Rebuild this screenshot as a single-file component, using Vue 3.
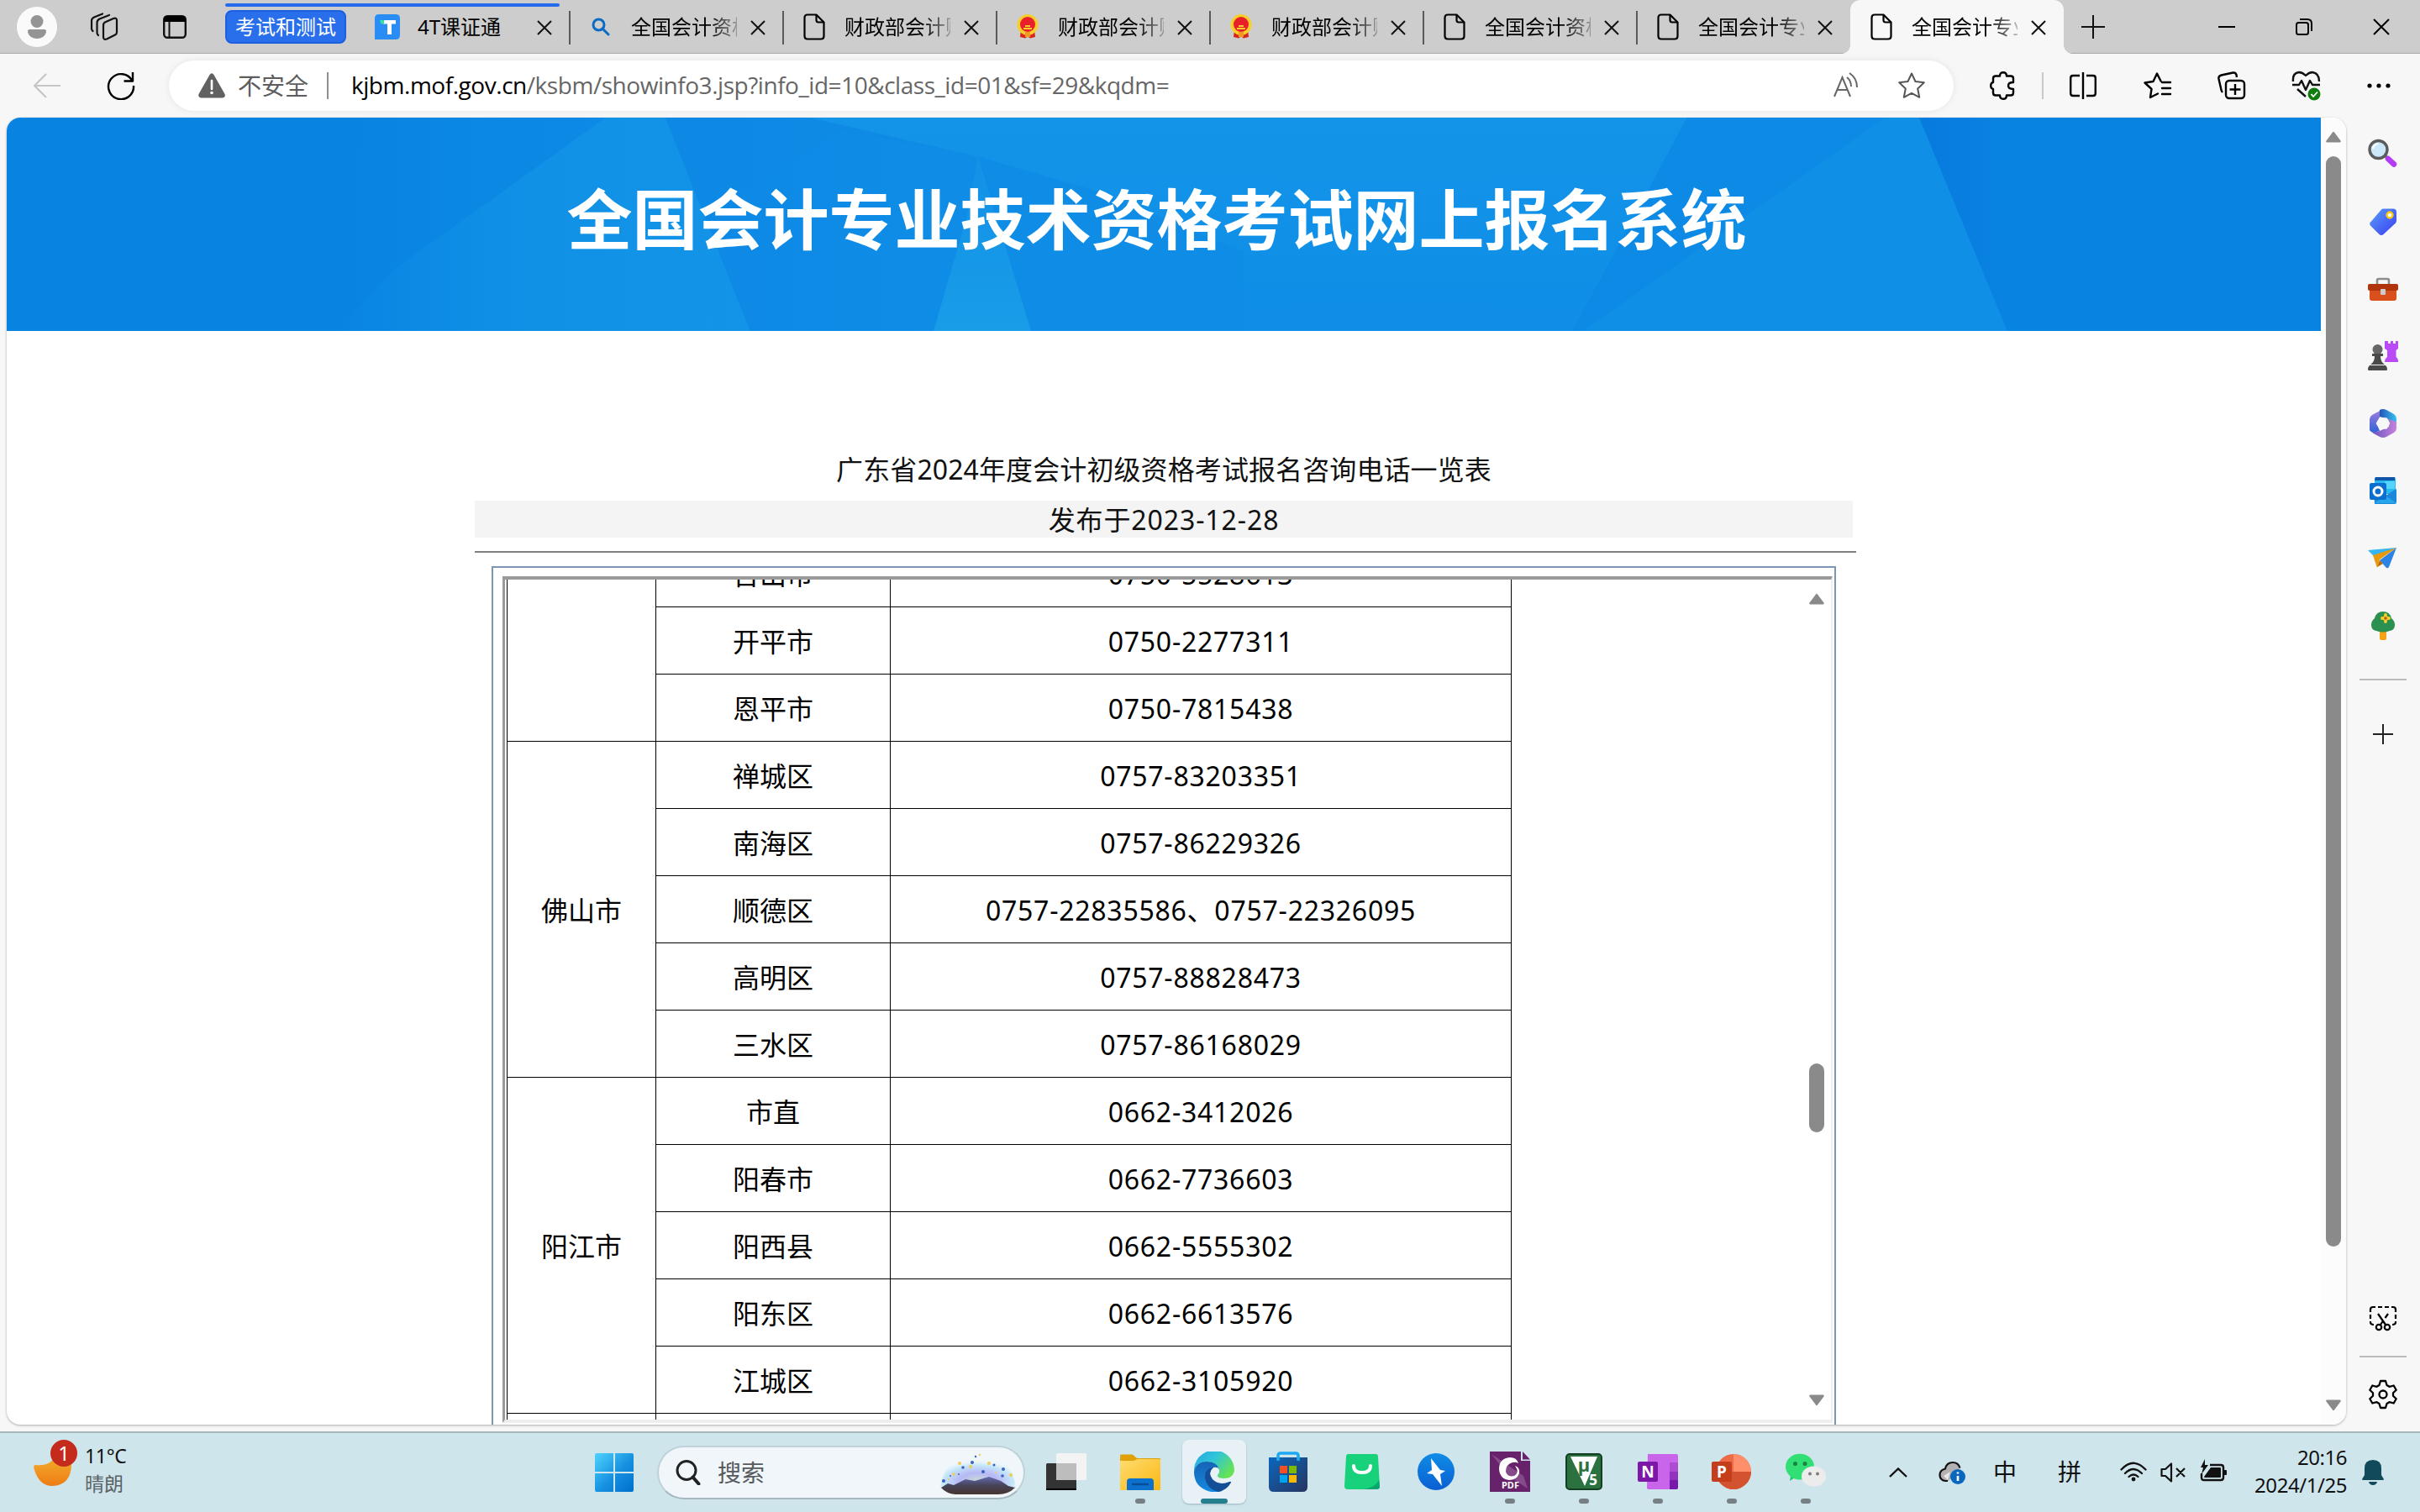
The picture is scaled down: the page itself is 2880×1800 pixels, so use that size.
<script setup>
const tabs = [
  { title: '4T课证通', icon: 'tclass' },
  { title: '全国会计资格评价网', icon: 'search' },
  { title: '财政部会计财务评价中心', icon: 'page' },
  { title: '财政部会计财务评价中心', icon: 'emblem' },
  { title: '财政部会计财务评价中心', icon: 'emblem' },
  { title: '全国会计资格评价网', icon: 'page' },
  { title: '全国会计专业技术资格', icon: 'page' },
  { title: '全国会计专业技术资格', icon: 'page', active: true },
]

const groups = [
  { city: '', rows: [['台山市', '0750-5528613'], ['开平市', '0750-2277311'], ['恩平市', '0750-7815438']] },
  {
    city: '佛山市',
    rows: [
      ['禅城区', '0757-83203351'],
      ['南海区', '0757-86229326'],
      ['顺德区', '0757-22835586、0757-22326095'],
      ['高明区', '0757-88828473'],
      ['三水区', '0757-86168029'],
    ],
  },
  {
    city: '阳江市',
    rows: [
      ['市直', '0662-3412026'],
      ['阳春市', '0662-7736603'],
      ['阳西县', '0662-5555302'],
      ['阳东区', '0662-6613576'],
      ['江城区', '0662-3105920'],
    ],
  },
  { city: '', rows: [['', '']] },
]
</script>

<template>
  <div class="screen">
    <header class="tabbar">
      <svg class="avatar" width="48" height="48" viewBox="0 0 48 48">
        <circle cx="24" cy="24" r="24" fill="#fafafa" />
        <circle cx="24" cy="17.500" r="7.500" fill="#949494" />
        <path d="M15 27h18q2 0 2 2c0 5-5 9-11 9s-11-4-11-9q0-2 2-2z" fill="#949494" />
      </svg>
      <svg class="ws" width="34" height="34" viewBox="0 0 34 34" fill="none" stroke="#111" stroke-width="2.200" stroke-linejoin="round" stroke-linecap="round">
        <path d="M19 11l9-4q4-1.500 4 2.500v14q0 2-2 3l-10 5q-4 1.500-4-2.500V15q0-3 3-4z" />
        <path d="M10 27q-1.500-1-1.500-3V12q0-3 3-4.500L23 3" />
        <path d="M3.500 22Q2 21 2 19V9.500Q2 7 5 5.500L15 1.500" />
      </svg>
      <svg class="vt" width="28" height="28" viewBox="0 0 28 28">
        <rect x="1.200" y="1.200" width="25.600" height="25.600" rx="4" fill="none" stroke="#111" stroke-width="2.400" />
        <path d="M1 8V5q0-4 4-4h18q4 0 4 4v3z" fill="#000" />
        <path d="M7.500 8v19" stroke="#111" stroke-width="2" />
      </svg>
      <div class="group">
        <div class="pill">考试和测试</div>
        <div class="groupline"></div>
      </div>
      <div v-for="(t, i) in tabs" :key="i" class="tab" :class="{ active: t.active, last: i === 6 }">
        <span class="ticon">
          <svg v-if="t.icon === 'tclass'" width="30" height="30" viewBox="0 0 30 30">
            <path d="M5 0h20q5 0 5 5v20q0 5-5 5H0V5q0-5 5-5z" fill="#2a8df6" />
            <path d="M10 7h15v4.500h-5V24h-5V11.500h-5z" fill="#fff" />
            <path d="M6 7h5v4.500H7.500z" fill="#2be3a4" />
          </svg>
          <svg v-else-if="t.icon === 'search'" width="22" height="22" viewBox="0 0 22 22" fill="none" stroke="#0b6bc4" stroke-width="3">
            <circle cx="8.500" cy="8.500" r="6.500" /><path d="M13 13l7 7" stroke-linecap="round" />
          </svg>
          <svg v-else-if="t.icon === 'page'" width="26" height="32" viewBox="0 0 26 32" fill="none" stroke="#000" stroke-width="2.200" stroke-linejoin="round">
            <path d="M5 1.500h10.500l9 9V27q0 3.500-3.500 3.500H5Q1.500 30.500 1.500 27V5Q1.500 1.500 5 1.500z" />
            <path d="M15.500 1.500V8q0 2.500 2.500 2.500h6.500" />
          </svg>
          <svg v-else width="28" height="30" viewBox="0 0 28 30">
            <path d="M6 18l-1 9 6 1.500 3-2 3 2 6-1.500-1-9z" fill="#d9261c" />
            <circle cx="14" cy="12.500" r="12.500" fill="#f8cf2a" />
            <circle cx="14" cy="12" r="9" fill="#e8202a" />
            <path d="M9 16h10v2H9zM11 13h6v2h-6z" fill="#f8cf2a" />
            <path d="M11 21h6v6h-6z" fill="#f29a24" />
          </svg>
        </span>
        <span class="ttext" :class="{ fade: i > 0 }">{{ t.title }}</span>
        <svg class="tclose" width="18" height="18" viewBox="0 0 18 18" stroke="#111" stroke-width="2"><path d="M1 1l16 16M17 1L1 17" /></svg>
      </div>
      <svg class="newtab" width="28" height="28" viewBox="0 0 28 28" stroke="#111" stroke-width="2"><path d="M14 0v28M0 14h28" /></svg>
      <div class="winbtns">
        <svg width="20" height="20" viewBox="0 0 20 20" stroke="#000" stroke-width="2"><path d="M0 10h20" /></svg>
        <svg width="20" height="20" viewBox="0 0 20 20" fill="none" stroke="#000" stroke-width="2"><rect x="1" y="5" width="14" height="14" rx="2.500" /><path d="M5 1h9q5 0 5 5v9" /></svg>
        <svg width="20" height="20" viewBox="0 0 20 20" stroke="#000" stroke-width="2"><path d="M1 1l18 18M19 1L1 19" /></svg>
      </div>
    </header>

    <div class="toolbar">
      <svg class="back" width="34" height="30" viewBox="0 0 34 30" fill="none" stroke="#c6c6c6" stroke-width="2.200"><path d="M33 15H2M16 1L2 15l14 14" /></svg>
      <svg class="reload" width="34" height="34" viewBox="0 0 34 34" fill="none" stroke="#000" stroke-width="2.400"><path d="M30.500 11.500A15 15 0 1 0 32 17M31 1v10.500H20.500" stroke-linejoin="round" /></svg>
      <div class="address">
        <svg class="warn" width="32" height="30" viewBox="0 0 32 30">
          <path d="M13.500 2q2.500-3.500 5 0l13 23q1.500 4-3 4.500h-25Q-.5 29 .5 25z" fill="#616161" />
          <path d="M16 9v10" stroke="#fff" stroke-width="2.600" stroke-linecap="round" /><circle cx="16" cy="23.500" r="1.800" fill="#fff" />
        </svg>
        <span class="unsafe">不安全</span>
        <i class="asep"></i>
        <span class="url"><b>kjbm.mof.gov.cn</b>/ksbm/showinfo3.jsp?info_id=10&amp;class_id=01&amp;sf=29&amp;kqdm=</span>
        <svg class="read" width="32" height="32" viewBox="0 0 32 32" fill="none" stroke="#666" stroke-width="2"><path d="M1 29L10.500 6 20 29M4.500 21h12M16 6q5 4 5 11M19 1q9 6 9 17" /></svg>
        <svg class="star" width="32" height="32" viewBox="0 0 32 32" fill="none" stroke="#555" stroke-width="2" stroke-linejoin="round"><path d="M16 1.500l4.500 9.500 10.300 1.300-7.600 7.200 2 10.300L16 24.800l-9.200 5 2-10.300L1.200 12.300 11.500 11z" /></svg>
      </div>
      <svg class="puz" width="30" height="34" viewBox="0 0 30 34" fill="none" stroke="#000" stroke-width="2.400" stroke-linejoin="round"><path d="M7 5.500h5q0-4.300 4-4.300t4 4.300h5q3 0 3 3v4.500q-6 0-6 4t6 4v4.500q0 3-3 3h-5q0 4.300-4 4.300t-4-4.300H7q-3 0-3-3V21q-2.800-.5-2.800-4T4 13V8.500q0-3 3-3z" /></svg>
      <i class="tsep"></i>
      <svg class="split" width="32" height="34" viewBox="0 0 32 34" fill="none" stroke="#000" stroke-width="2.400"><path d="M16 1v32M12 5H4Q1.200 5 1.200 8v18q0 3 2.800 3h8M20 5h8q2.800 0 2.800 3v18q0 3-2.800 3h-8" /></svg>
      <svg class="favs" width="34" height="32" viewBox="0 0 34 32" fill="none" stroke="#000" stroke-width="2.400" stroke-linejoin="round" stroke-linecap="round"><path d="M17 25.500L8 30l1.500-10L1.500 12.500 11.500 11 16 1.500 20.500 10.500M22 12h10M22 19h10M22 26h10" /></svg>
      <svg class="coll" width="34" height="34" viewBox="0 0 34 34" fill="none" stroke="#000" stroke-width="2.400" stroke-linejoin="round"><rect x="10" y="11" width="22" height="21" rx="4" /><path d="M21 15v13M14.500 21.500h13M6 25q-1-1-1.500-3L1.500 9q-.7-3.500 3-4.500l14-3q3-.5 4 2.500L23 7" /></svg>
      <svg class="heart" width="36" height="36" viewBox="0 0 36 36" fill="none" stroke="#111" stroke-width="2.400" stroke-linejoin="round"><path d="M2 13Q1 3 9 2q4 0 8 4 4-4 8-4 8 1 8 11M1 17h8l3-5 5 11 5-11 3 5h9M7 22l10 9" /><circle cx="27" cy="28" r="7.500" fill="#107c10" stroke="none" /><path d="M23.500 28l2.500 3 5-5.500" stroke="#fff" stroke-width="1.800" /></svg>
      <svg class="dots" width="28" height="6" viewBox="0 0 28 6"><circle cx="3" cy="3" r="2.600" /><circle cx="14" cy="3" r="2.600" /><circle cx="25" cy="3" r="2.600" /></svg>
    </div>

    <div class="body">
      <main class="view">
        <div class="page">
          <div class="banner">
            <svg class="facets" width="2754" height="254" viewBox="8 140 2754 254" preserveAspectRatio="none">
              <defs>
                <linearGradient id="haze" x1="0" x2="1"><stop offset="0" stop-color="#0f8ee7" stop-opacity="0" /><stop offset="1" stop-color="#0f8ee7" stop-opacity=".9" /></linearGradient>
                <linearGradient id="fade" x1="0" x2="1"><stop offset="0" stop-color="#1193e7" stop-opacity="0" /><stop offset=".45" stop-color="#1193e7" stop-opacity=".8" /><stop offset="1" stop-color="#1394e8" /></linearGradient>
                <linearGradient id="mid" x1="0" x2="1"><stop offset="0" stop-color="#0d88e5" /><stop offset="1" stop-color="#108ee7" /></linearGradient>
                <linearGradient id="top" x1="0" x2="0" y1="0" y2="1"><stop offset="0" stop-color="#1394e8" /><stop offset="1" stop-color="#0f8de7" /></linearGradient>
                <linearGradient id="shard" x1="0" x2="0" y1="0" y2="1"><stop offset="0" stop-color="#1697e8" stop-opacity=".5" /><stop offset="1" stop-color="#199de8" /></linearGradient>
                <linearGradient id="edge" x1="0" x2="1"><stop offset="0" stop-color="#077bde" /><stop offset="1" stop-color="#0983e2" /></linearGradient>
              </defs>
              <path d="M8 140H2762V394H8z" fill="#0983e2" />
              <path d="M430 140H792L850 394H400z" fill="url(#haze)" />
              <path d="M721 140H792L893 394H400L470 320z" fill="url(#fade)" />
              <path d="M792 140H1400V394H893z" fill="url(#mid)" />
              <path d="M840 260L1000 155 1166 187 1227 394H893z" fill="#128fe7" opacity=".3" />
              <path d="M964 140H2008L1872 394H1400L1313 230 1166 187z" fill="url(#top)" />
              <path d="M1166 187L1313 230 1480 300V394H1227z" fill="#0f8de6" />
              <path d="M1164 187L1227 394H1111L1150 260z" fill="url(#shard)" />
              <path d="M2008 140H2284L1884 394H1872z" fill="#0d89e6" />
              <path d="M2243 140H2284L2389 394H1884z" fill="#0f8fe6" />
              <path d="M2284 140H2390V394H2389z" fill="url(#edge)" />
            </svg>
            <h1>全国会计专业技术资格考试网上报名系统</h1>
          </div>
          <section class="article">
            <div class="headline">广东省2024年度会计初级资格考试报名咨询电话一览表</div>
            <div class="date">发布于2023-12-28</div>
            <div class="rule"></div>
            <div class="frame">
              <div class="inner">
                <table>
                  <tbody v-for="(g, gi) in groups" :key="gi">
                    <tr v-for="(r, ri) in g.rows" :key="ri">
                      <td v-if="ri === 0" class="city" :rowspan="g.rows.length">{{ g.city }}</td>
                      <td class="area">{{ r[0] }}</td>
                      <td class="phone">{{ r[1] }}</td>
                    </tr>
                  </tbody>
                </table>
                <div class="iscroll">
                  <svg width="18" height="14" viewBox="0 0 18 14"><path d="M8 1.500q1-1.500 2 0l7.500 10q.7 2-1 2H1.500q-2 0-1-2z" fill="#8a8a8a" /></svg>
                  <div class="ithumb"></div>
                  <svg class="down" width="18" height="14" viewBox="0 0 18 14"><path d="M8 12.500q1 1.500 2 0l7.500-10q.7-2-1-2H1.500q-2 0-1 2z" fill="#8a8a8a" /></svg>
                </div>
              </div>
            </div>
          </section>
        </div>
        <div class="scroll">
          <svg width="18" height="14" viewBox="0 0 18 14"><path d="M8 1.500q1-1.500 2 0l7.500 10q.7 2-1 2H1.500q-2 0-1-2z" fill="#8a8a8a" /></svg>
          <div class="thumb"></div>
          <svg class="down" width="18" height="14" viewBox="0 0 18 14"><path d="M8 12.500q1 1.500 2 0l7.500-10q.7-2-1-2H1.500q-2 0-1 2z" fill="#8a8a8a" /></svg>
        </div>
      </main>

      <aside class="side">
        <svg viewBox="0 0 36 36"><path d="M21 21l7 6" stroke="#777" stroke-width="4" /><path d="M24 24l7 6.500" stroke="#b43cf5" stroke-width="6.500" stroke-linecap="round" /><circle cx="12.500" cy="13" r="10.500" fill="#cbe8fb" stroke="#5c5c5c" stroke-width="3.400" /><path d="M6 12q1-5 6-6" stroke="#fff" stroke-width="2" fill="none" /></svg>
        <svg viewBox="0 0 36 36"><defs><linearGradient id="tg" x1="0" x2="1" y1="0" y2="1"><stop offset="0" stop-color="#5a9dfa" /><stop offset="1" stop-color="#3a3df0" /></linearGradient></defs><path transform="translate(0 1.500)" d="M18 2h12q4 0 4 4v10q0 2-1.500 3.500L19 32q-3 3-6 0L3 22q-2-3 1-5L16 3q1-1 2-1z" fill="url(#tg)" /><circle cx="26" cy="11" r="3.500" fill="#fff" stroke="#f8c90e" stroke-width="2.400" /></svg>
        <svg viewBox="0 0 36 36"><path d="M11 12V8q0-2 2-2h10q2 0 2 2v4" fill="none" stroke="#8c8c8c" stroke-width="2.600" /><path d="M2 16h32v13q0 3-3 3H5q-3 0-3-3z" fill="#d9501c" /><path d="M2 12h32q2 0 2 2v4q0 2-2 2H2q-2 0-2-2v-4q0-2 2-2z" fill="#b0340c" /><rect x="15" y="18" width="6" height="7" rx="1" fill="#c9cdd0" /></svg>
        <svg viewBox="0 0 36 36"><path d="M20 0h4v3h3V0h3v3h3V0h3v9l-2.500 2v8q3 2 2.500 6H20q0-4 3-6v-8l-3-2z" fill="#b84af8" /><circle cx="11.500" cy="10" r="6" fill="#666" /><path d="M5 15h13v3H5zM8 18h7q0 7 5 10H3q5-3 5-10zM2 29h19q3 3 1.500 6H.5q-1.500-3 1.500-6z" fill="#4a4a4a" /></svg>
        <svg viewBox="0 0 36 36"><defs><linearGradient id="m1" x1="0" x2="0" y1="0" y2="1"><stop offset="0" stop-color="#a57fe0" /><stop offset="1" stop-color="#2f62d8" /></linearGradient><linearGradient id="m2" x1="0" x2="1"><stop offset="0" stop-color="#2455b8" /><stop offset="1" stop-color="#37c3f0" /></linearGradient><linearGradient id="m3" x1="0" x2="1"><stop offset="0" stop-color="#6a55c0" /><stop offset="1" stop-color="#c583dc" /></linearGradient></defs><path d="M18 1L5 8q-3 2-3 5v12q0 3 5 4l7-2-3-9 3-7z" fill="url(#m1)" /><path d="M14 2q4-2 8 0l9 5q3 2 3 5v8l-10-7-10-3z" fill="url(#m2)" /><path d="M34 16v8q0 3-3 5l-9 5q-4 2-8 0l-9-5 9-2 11-5-1-9z" fill="url(#m3)" /><path d="M14 12h8l3.500 6-3.500 6h-8l-3.500-6z" fill="#f7f7f7" stroke="#f7f7f7" stroke-width="1.500" stroke-linejoin="round" /></svg>
        <svg viewBox="0 0 36 36"><path d="M9 2h22q2 0 2 2v18H8V3z" fill="#28b8f0" /><path d="M9 2h23v4H8z" fill="#0f55a8" /><path d="M20 7h12v9H20z" fill="#55d5fc" /><path d="M7 20l14 4 13-8v16q0 2-2 2H8z" fill="#1b88dc" /><path d="M21 24l13 9H8z" fill="#28a6ea" /><rect x="2" y="9" width="20" height="20" rx="2" fill="#0b6fcf" /><circle cx="12" cy="19" r="5" fill="none" stroke="#fff" stroke-width="3" /></svg>
        <svg viewBox="0 0 36 36"><path d="M0 8L34 5 10 18z" fill="#35b5f3" /><path d="M6 14L34 5 14 19 11 29z" fill="#e9990c" /><path d="M14 20L34 5 25 28q-1 2-3 1z" fill="#2b83e6" /><path d="M11 28l3-8 4 4z" fill="#b86b05" /></svg>
        <svg viewBox="0 0 36 36"><path d="M14 22h8v11q0 2-2 2h-4q-2 0-2-2z" fill="#f5a314" /><path d="M18 1q8 0 10 8 4 3 4 8 0 6-6 7-8 3-16 0-6-1-6-7 0-5 4-8 2-8 10-8z" fill="#2a9150" /><path d="M21 5v8M17 9h8" stroke="#f8cf2a" stroke-width="3.800" stroke-linecap="round" /><circle cx="21" cy="9" r="1.800" fill="#b85e10" /></svg>
        <i class="sline"></i>
        <svg class="plus" viewBox="0 0 24 24" stroke="#222" stroke-width="2"><path d="M12 0v24M0 12h24" /></svg>
        <svg class="cut" viewBox="0 0 36 36" fill="none" stroke="#000" stroke-width="2.200"><path d="M3 10V7q0-3 3-3h3M12 4h5M20 4h5M28 4h2q3 0 3 3v3M3 13v5M33 13v5M3 21v1q0 3 4 3M33 21v1q0 3-4 3M12 12l9 13M24 12l-3.500 5M18 20.500L15 25" /><circle cx="13" cy="28" r="3.200" /><circle cx="23" cy="28" r="3.200" /></svg>
        <i class="sline b"></i>
        <svg class="gear" viewBox="0 0 36 36" fill="none" stroke="#000" stroke-width="2.300" stroke-linejoin="round"><path d="M15 2h6l1.500 5 3 1.800 5.200-1.300 3 5.200-3.700 3.600v3.400l3.700 3.600-3 5.200-5.200-1.300-3 1.800L21 34h-6l-1.500-5-3-1.800-5.200 1.300-3-5.200L6 19.700v-3.400l-3.700-3.600 3-5.200 5.200 1.300 3-1.800z" /><circle cx="18" cy="18" r="4.500" /></svg>
      </aside>
    </div>

    <footer class="taskbar">
      <div class="weather">
        <svg width="54" height="58" viewBox="0 0 54 58"><defs><linearGradient id="mn" x1="0" x2="0" y1="0" y2="1"><stop offset="0" stop-color="#f3b52c" /><stop offset="1" stop-color="#ee7c16" /></linearGradient></defs><path d="M26 16Q24 33 2 31q-3 0-1 6 6 19 21 19 23-1 23-26V20z" fill="url(#mn)" /><circle cx="36" cy="17" r="16" fill="#c42b1c" /><text x="36" y="25.500" text-anchor="middle" class="badge">1</text></svg>
        <div class="wtext"><span>11°C</span><span class="dim">晴朗</span></div>
      </div>
      <svg class="start" width="46" height="46" viewBox="0 0 46 46"><defs><linearGradient id="st" gradientUnits="userSpaceOnUse" x1="0" y1="0" x2="46" y2="46"><stop offset="0" stop-color="#4fd3fd" /><stop offset=".55" stop-color="#1590e0" /><stop offset="1" stop-color="#0070cc" /></linearGradient></defs><path d="M2 0h20v22H0V2Q0 0 2 0zM24 0h20q2 0 2 2v20H24zM0 24h22v22H2q-2 0-2-2zM24 24h22v20q0 2-2 2H24z" fill="url(#st)" /></svg>
      <div class="search">
        <svg width="30" height="30" viewBox="0 0 30 30" fill="none" stroke="#222" stroke-width="3"><circle cx="13" cy="12.500" r="11" /><path d="M20.500 20.500l7 8" stroke-width="4" stroke-linecap="round" /></svg>
        <span>搜索</span>
        <svg class="mount" width="90" height="50" viewBox="0 0 90 50">
          <defs><radialGradient id="sky" cx=".5" cy=".8" r=".62"><stop offset="0" stop-color="#c9dfd0" /><stop offset=".4" stop-color="#b7b8f6" /><stop offset=".75" stop-color="#c5e8fa" /><stop offset="1" stop-color="#f0f6fa" stop-opacity="0" /></radialGradient><linearGradient id="mt" x1="0" x2="0" y1="0" y2="1"><stop offset="0" stop-color="#646bb0" /><stop offset=".5" stop-color="#464257" /><stop offset="1" stop-color="#47352f" /></linearGradient></defs>
          <path d="M0 42Q4 2 45 0 86 2 90 42z" fill="url(#sky)" />
          <path d="M1 41l8-5 7 2 14-7 11 2 17-5 14 5 9 6 8 2q-8 8-20 8H18Q7 48 1 41z" fill="url(#mt)" />
          <g fill="#3b62bd"><circle cx="4" cy="33" r="2" /><circle cx="27" cy="17" r="1.800" /><circle cx="38" cy="11" r="2" /><circle cx="51" cy="22" r="2" /><circle cx="75" cy="19" r="2" /><circle cx="74" cy="27" r="1.800" /><circle cx="64" cy="14" r="1.500" /><circle cx="42" cy="4" r="1.200" /><circle cx="22" cy="25" r="1" /><circle cx="12" cy="27" r="1" /></g>
          <g fill="#f1cc55"><circle cx="23" cy="12" r="2" /><circle cx="36" cy="16" r="2" /><circle cx="58" cy="12" r="2" /><circle cx="16" cy="25" r="1.800" /><circle cx="84" cy="26" r="2" /><circle cx="47" cy="2" r="1.200" /><circle cx="66" cy="23" r="1" /><circle cx="10" cy="31" r="1" /></g>
        </svg>
      </div>
      <div class="apps">
        <div class="app"><svg viewBox="0 0 48 48"><rect x="0" y="14" width="36" height="32" rx="1.500" fill="#333" /><path d="M0 44h36v1q0 1-1 1H1q-1 0-1-1z" fill="#000" /><rect x="12" y="2" width="36" height="32" rx="1.500" fill="#f3f3f3" /><path d="M12 14h24v20H12z" fill="#bdbdbd" /></svg></div>
        <div class="app run"><svg viewBox="0 0 48 48"><defs><linearGradient id="fd" x1="0" x2="1" y1="0" y2="1"><stop offset="0" stop-color="#ffdc70" /><stop offset="1" stop-color="#fbb711" /></linearGradient></defs><path d="M0 5q0-1.500 1.500-1.500H14q1.500 0 3 2L20 8h27q1 0 1 1v8H0z" fill="#e0a106" /><path d="M0 11h16l5-2h26q1 0 1 1v35q0 1-1 1H1q-1 0-1-1z" fill="url(#fd)" /><path d="M8 46V36q0-4 4-4h24q4 0 4 4v10z" fill="#0c71cc" /><path d="M14 39h20" stroke="#0a4d94" stroke-width="2.400" /></svg></div>
        <div class="app cur"><svg viewBox="0 0 48 48"><defs><linearGradient id="e1" x1="0" x2="1" y1="0" y2=".6"><stop offset="0" stop-color="#2aa5e8" /><stop offset=".5" stop-color="#30c5d8" /><stop offset="1" stop-color="#66e255" /></linearGradient><linearGradient id="e2" x1="0" x2="0" y1="0" y2="1"><stop offset="0" stop-color="#1664b5" /><stop offset="1" stop-color="#1489e0" /></linearGradient></defs><path d="M0 24A24 24 0 0 1 48 21C48 29 42 32 36 32Q28 32 28 29C28 27 31 26 30 22Q27 12 15 12 4 13 0 24z" fill="url(#e1)" /><path d="M0 24Q3 12 15 12q12 0 15 9-2-3-7-2-6 2-6 11 2 14 16 17-10 3-19-1Q0 40 0 24z" fill="url(#e2)" /><path d="M21 19q-9 3-8 13 3 13 16 16 10-2 15-11 0-2-2-1-12 5-20-3-6-8 1-14z" fill="#124f96" /></svg></div>
        <div class="app"><svg viewBox="0 0 48 48"><defs><linearGradient id="sr" x1="0" x2="1" y1="0" y2="1"><stop offset="0" stop-color="#0b67bd" /><stop offset="1" stop-color="#27345f" /></linearGradient></defs><path d="M1 7h46v35q0 6-6 6H7q-6 0-6-6z" fill="url(#sr)" /><path d="M12 11V5q0-3 3-3h18q3 0 3 3v6" fill="none" stroke="#1ca9f3" stroke-width="3.600" /><path d="M14 17h9v9h-9z" fill="#f25022" /><path d="M25 17h9v9h-9z" fill="#7fba00" /><path d="M14 28h9v9h-9z" fill="#00a4ef" /><path d="M25 28h9v9h-9z" fill="#ffb900" /></svg></div>
        <div class="app"><svg viewBox="0 0 48 48"><path d="M5 6q0-3 3-3h32q3 0 3 3l2 35q0 4-4 4H7q-4 0-4-4z" fill="#17d27b" /><path d="M44 34l1 8q0 3-4 3H25q15-2 19-11z" fill="#08a86c" /><path d="M14 17q0 8 10 8t10-8" fill="none" stroke="#fff" stroke-width="4" stroke-linecap="round" /></svg></div>
        <div class="app"><svg viewBox="0 0 48 48"><defs><linearGradient id="bl" x1="0" x2="0" y1="0" y2="1"><stop offset="0" stop-color="#108ce6" /><stop offset="1" stop-color="#0a5fd2" /></linearGradient></defs><circle cx="24" cy="24" r="22" fill="url(#bl)" /><path d="M18 8l11 14 6 1-6 4 2 14L20 27l-7-1 6-4z" fill="#fff" /></svg></div>
        <div class="app run"><svg viewBox="0 0 48 48"><path d="M0 0h37v11h11v37H0z" fill="#68216b" /><path d="M39 0l9 9.500h-9z" fill="#68216b" /><path d="M2 3l38 26 5 15-23-15z" fill="#8d5a92" opacity=".75" /><path d="M34 14q-2-7-10-7-13 1-13 14 1 12 12 13 9 0 12-8 1-7-5-9 6 8-1 12-8 2-10-5 0-9 8-11 4-1 7 1z" fill="#fff" /><text x="24.500" y="44" text-anchor="middle" class="pdf">PDF</text></svg></div>
        <div class="app run"><svg viewBox="0 0 48 48"><rect x="3" y="3" width="42" height="42" rx="4" fill="#2c7240" stroke="#153f22" stroke-width="2" /><path d="M8 6h32L25 41z" fill="#fff" /><text x="24" y="24" text-anchor="middle" class="mu">µ</text><text x="35" y="40" text-anchor="middle" class="five">5</text></svg></div>
        <div class="app run"><svg viewBox="0 0 48 48"><path d="M12 3h34q2 0 2 2v38q0 2-2 2H13q-2 0-2-2z" fill="#ca64ea" /><path d="M38 13h10v11H38z" fill="#ae4bd5" /><path d="M38 24h10v10H38z" fill="#9332bf" /><path d="M38 34h10v9q0 2-2 2h-8z" fill="#7719aa" /><rect x="0" y="12" width="24" height="24" rx="2" fill="#7c17a8" /><text x="12" y="31" text-anchor="middle" class="ltr">N</text></svg></div>
        <div class="app run"><svg viewBox="0 0 48 48"><circle cx="26" cy="24" r="21" fill="#ed6c47" /><path d="M26 3a21 21 0 0 1 21 21H26z" fill="#ff8f6b" /><path d="M5 24h42a21 21 0 0 1-42 0z" fill="#d35230" /><rect x="0" y="12" width="24" height="24" rx="2" fill="#c43e1c" /><text x="12" y="31" text-anchor="middle" class="ltr">P</text></svg></div>
        <div class="app run"><svg viewBox="0 0 48 48"><path d="M6 29l-1 6 6-4z" fill="#1bcb62" /><circle cx="17" cy="19" r="17" fill="#32df75" transform="translate(0 1) scale(1 .9)" /><path d="M38 36l5 6 0-9z" fill="#e4e4e4" /><ellipse cx="33.500" cy="29.500" rx="14.500" ry="12" fill="#ececec" /><g fill="#17843f"><circle cx="11.500" cy="14.500" r="2.500" /><circle cx="23" cy="14.500" r="2.500" /></g><g fill="#7d7d7d"><circle cx="29" cy="26.500" r="2" /><circle cx="38" cy="26.500" r="2" /></g></svg></div>
      </div>
      <div class="tray">
        <svg class="chev" width="22" height="12" viewBox="0 0 22 12" fill="none" stroke="#111" stroke-width="2.400"><path d="M1 11L11 1.500 21 11" /></svg>
        <svg class="cloud" width="32" height="30" viewBox="0 0 32 30"><path d="M10 25H8q-6.500-1-6.500-7T8 10.500Q9.500 3 17 3q6.500 0 8.500 6.500L12 25z" fill="#b3b1b3" /><path d="M11 25H8q-6.500-1-6.500-7T8 10.500Q9.500 3 17 3q6.500 0 8.500 6.500" fill="none" stroke="#111" stroke-width="2.200" /><path d="M6 19l8-5-3 10z" fill="#e8e8e8" /><circle cx="23" cy="20" r="9" fill="#0a67c0" /><path d="M23 19v6M23 14.500v2" stroke="#fff" stroke-width="2.600" /></svg>
        <span class="ime">中</span>
        <span class="ime two">拼</span>
        <svg class="wifi" width="32" height="24" viewBox="0 0 32 24" fill="none" stroke="#111" stroke-width="2.300" stroke-linecap="round"><path d="M1.500 9.500Q16-6 30.500 9.500M6 14q10-10 20 0M10.500 18q5.500-5 11 0" /><circle cx="16" cy="21" r="2.400" fill="#111" stroke="none" /></svg>
        <svg class="spk" width="32" height="24" viewBox="0 0 32 24" fill="none" stroke="#111" stroke-width="2.200" stroke-linejoin="round"><path d="M1.500 8H6l7-6.500v21L6 16H1.500zM19 7l10 10M29 7L19 17" /></svg>
        <svg class="bat" width="34" height="28" viewBox="0 0 34 28"><path d="M12 7h13q3 0 3 3v12q0 3-3 3H5q-3 0-3-3v-5" fill="none" stroke="#111" stroke-width="2.400" /><path d="M13 10h11q1 0 1 1v10q0 1-1 1H6q-1 0-1-1z" fill="#111" /><path d="M29 13h2q1 0 1 1v4q0 1-1 1h-2z" fill="#111" /><path d="M6 0L1 10h3L2 18l8-11H6z" fill="#111" /></svg>
        <div class="clock"><span>20:16</span><span>2024/1/25</span></div>
        <svg class="bell" width="28" height="30" viewBox="0 0 28 30" fill="#114b5b"><path d="M14 0q10 0 10 10v8l3 5q0 1-1 1H2q-1 0-1-1l3-5v-8Q4 0 14 0zM9 26h10q-1 4-5 4t-5-4z" /></svg>
      </div>
    </footer>
  </div>
</template>

<style>
body {
  background: #f7f7f7;
  overflow: hidden;
}
</style>

<style scoped>
.screen {
  width: 2880px;
  height: 1800px;
  display: flex;
  flex-direction: column;
  overflow: hidden;
  background: #f7f7f7;
  font-family: "Noto Sans", "Noto Sans CJK SC", sans-serif;
  color: #000;
}
svg { display: block; flex: none; }
.tabbar {
  height: 64px;
  flex: none;
  display: flex;
  align-items: center;
  background: #cdcdcd;
  box-shadow: inset 0 -2px 1px -1px #a9a9a9;
}
.avatar { margin-left: 20px; }
.ws { margin-left: 39px; }
.vt { margin-left: 53px; }
.group { margin-left: 46px; width: 156px; position: relative; }
.pill {
  width: 144px;
  height: 40px;
  box-sizing: border-box;
  border: 2px solid #1d5fe0;
  border-radius: 8px;
  background: #296fec;
  color: #fff;
  font-size: 24px;
  line-height: 36px;
  text-align: center;
  white-space: nowrap;
}
.groupline {
  position: absolute;
  left: 0;
  top: -8px;
  width: 398px;
  height: 4px;
  border-radius: 2px;
  background: #256beb;
}
.tab {
  width: 254px;
  height: 64px;
  flex: none;
  display: flex;
  align-items: center;
  position: relative;
}
.tab::after {
  content: "";
  position: absolute;
  right: -1px;
  top: 13px;
  width: 2px;
  height: 40px;
  background: #5a5a5a;
}
.tab.last::after { display: none; }
.tab.active {
  background: #f7f7f7;
  border-radius: 12px 12px 0 0;
}
.tab.active::before,
.tab.active::after {
  content: "";
  position: absolute;
  top: auto;
  bottom: 0;
  width: 10px;
  height: 10px;
}
.tab.active::before { left: -10px; background: radial-gradient(circle at 0 0, transparent 9.5px, #f7f7f7 10px); }
.tab.active::after { right: -10px; background: radial-gradient(circle at 100% 0, transparent 9.5px, #f7f7f7 10px); }
.ticon { width: 30px; margin-left: 22px; display: flex; justify-content: center; }
.ttext {
  margin-left: 21px;
  width: 126px;
  overflow: hidden;
  white-space: nowrap;
  font-size: 24px;
  line-height: 36px;
}
.fade {
  -webkit-mask-image: linear-gradient(90deg, #000 74%, rgba(0, 0, 0, 0.25) 100%);
  mask-image: linear-gradient(90deg, #000 74%, rgba(0, 0, 0, 0.25) 100%);
}
.tclose { margin-left: 16px; position: relative; top: 1px; }
.newtab { margin-left: 21px; }
.winbtns { margin-left: auto; margin-right: 36px; display: flex; gap: 72px; }
.toolbar { height: 76px; flex: none; display: flex; align-items: center; }
.back { margin-left: 39px; }
.reload { margin-left: 54px; }
.address {
  width: 2124px;
  height: 60px;
  margin-left: 40px;
  border-radius: 30px;
  background: #fff;
  box-shadow: 0 0 8px rgba(0, 0, 0, 0.08);
  display: flex;
  align-items: center;
}
.warn { margin-left: 35px; }
.unsafe { margin-left: 15px; width: 84px; font-size: 28px; line-height: 40px; color: #5d5d5d; white-space: nowrap; }
.asep { width: 2px; height: 32px; margin-left: 22px; background: #8f8f8f; }
.url { margin-left: 27px; margin-top: -2px; width: 980px; font-size: 28px; line-height: 40px; color: #666; white-space: nowrap; font-family: "Open Sans", "Noto Sans", sans-serif; letter-spacing: -0.46px; }
.url b { font-weight: 400; color: #000; }
.read { margin-left: auto; }
.star { margin-left: 45px; margin-right: 34px; }
.puz { margin-left: 43px; }
.tsep { width: 2px; height: 32px; margin-left: 32px; background: #c8c8c8; }
.split { margin-left: 31px; }
.favs { margin-left: 56px; }
.coll { margin-left: 54px; }
.heart { margin-left: 54px; }
.dots { margin-left: 54px; }
.body { height: 1564px; flex: none; display: flex; }
.view {
  width: 2784px;
  height: 1556px;
  margin-left: 8px;
  border-radius: 16px;
  overflow: hidden;
  background: #fff;
  box-shadow: 0 1px 3px rgba(0, 0, 0, 0.3);
  display: flex;
}
.page { width: 2754px; overflow: hidden; }
.banner { height: 254px; display: grid; }
.facets, .banner h1 { grid-area: 1 / 1; }
.banner h1 {
  margin: 77px 0 0;
  padding-right: 17px;
  text-align: center;
  color: #fff;
  font-size: 78px;
  line-height: 88px;
  height: 88px;
  font-weight: 700;
  z-index: 1;
}
.article { width: 1644px; margin-left: 557px; padding-top: 140px; font-size: 32px; color: #111; }
.headline { width: 1640px; height: 62px; line-height: 49px; text-align: center; letter-spacing: 0.1px; }
.date { width: 1640px; height: 44px; line-height: 46px; text-align: center; background: #f4f4f4; letter-spacing: 0.9px; }
.rule { height: 2px; margin-top: 16px; background: #808080; }
.frame {
  width: 1600px;
  height: 1100px;
  box-sizing: border-box;
  margin: 16px 0 0 20px;
  border: 2px solid #7a96b0;
  padding: 10px 2px 0 11px;
}
.inner {
  height: 1008px;
  box-sizing: border-box;
  border-style: solid;
  border-width: 4px 2px 4px 3px;
  border-color: #9a9a9a #eee #eee #9a9a9a;
  overflow: hidden;
  display: flex;
  justify-content: space-between;
  color: #000;
}
table {
  width: 1196px;
  margin: -47px 0 0 2px;
  border-spacing: 0;
  border-left: 1px solid #000;
  table-layout: fixed;
  align-self: flex-start;
}
td {
  height: 80px;
  box-sizing: border-box;
  padding: 3px 0 0;
  border-right: 1px solid #000;
  border-bottom: 1px solid #000;
  text-align: center;
  line-height: 44px;
}
.city { width: 177px; }
.area { width: 279px; }
.phone { width: 739px; letter-spacing: 0.75px; }
.iscroll { width: 30px; display: flex; flex-direction: column; align-items: center; padding-top: 16px; box-sizing: border-box; margin-right: 2px; }
.ithumb { width: 18px; height: 82px; border-radius: 9px; background: #8a8a8a; margin-top: 546px; }
.iscroll .down { margin-top: 312px; }
.scroll { width: 30px; background: #fcfcfc; display: flex; flex-direction: column; align-items: center; padding-top: 16px; box-sizing: border-box; }
.thumb { width: 18px; height: 1298px; border-radius: 9px; background: #8a8a8a; margin-top: 16px; }
.scroll .down { margin-top: 182px; }
.side { width: 88px; display: flex; flex-direction: column; align-items: center; padding-top: 25px; box-sizing: border-box; }
.side svg { width: 36px; height: 36px; margin-bottom: 44.3px; }
.side .sline { width: 56px; height: 2px; flex: none; background: #bcbcbc; margin-top: 1px; }
.side .plus { width: 24px; height: 24px; margin: 52px 0 0; }
.side .cut { margin: 666px 0 0; }
.side .sline.b { margin-top: 26px; }
.side .gear { margin: 26px 0 0; }
.taskbar {
  height: 96px;
  flex: none;
  box-sizing: border-box;
  border-top: 2px solid #a9b6bb;
  background: #cfe5ec;
  display: flex;
  align-items: center;
}
.weather { margin-left: 40px; width: 668px; display: flex; margin-top: -10px; }
.badge { font-size: 24px; fill: #fff; }
.wtext { margin-left: 7px; padding-top: 4px; display: flex; flex-direction: column; font-size: 23px; line-height: 33px; letter-spacing: -0.3px; color: #111; }
.dim { color: #5a6366; letter-spacing: 0; }
.start { flex: none; }
.search {
  width: 438px;
  height: 64px;
  box-sizing: border-box;
  margin-left: 28px;
  border: 2px solid #bfd2da;
  border-bottom-color: #a5b8c0;
  border-radius: 32px;
  background: #f0f6fa;
  display: flex;
  align-items: center;
}
.search > svg:first-child { margin-left: 20px; }
.search span { margin-left: 20px; font-size: 28px; line-height: 40px; color: #565a5c; }
.mount { margin-left: auto; margin-right: 9px; margin-top: 4px; }
.apps { display: flex; margin-left: 5px; }
.app {
  width: 88px;
  height: 94px;
  position: relative;
  display: flex;
  align-items: center;
  justify-content: center;
}
.app svg { width: 48px; height: 48px; position: relative; top: -1px; }
.app.run::after, .app.cur::after {
  content: "";
  position: absolute;
  left: 38px;
  top: 78px;
  width: 12px;
  height: 6px;
  border-radius: 3px;
  background: #767f83;
}
.app.cur::after { left: 28px; width: 32px; background: #24808f; }
.app.cur::before {
  content: "";
  position: absolute;
  left: 6px;
  top: 8px;
  width: 76px;
  height: 76px;
  border-radius: 8px;
  background: #e7f1f6;
  box-shadow: 0 1px 2px rgba(0, 40, 60, 0.25);
}
.pdf { font-size: 11px; font-weight: 700; fill: #fff; }
.mu { font-size: 22px; font-weight: 700; fill: #2c7240; }
.five { font-size: 17px; font-weight: 700; fill: #fff; }
.ltr { font-size: 19px; font-weight: 700; fill: #fff; }
.tray { margin-left: auto; display: flex; align-items: center; }
.cloud { margin-left: 37px; }
.ime { margin-left: 33px; margin-top: -2px; width: 28px; font-size: 28px; line-height: 40px; color: #111; }
.ime.two { margin-left: 49px; }
.wifi { margin-left: 46px; margin-top: -2px; }
.spk { margin-left: 16px; margin-top: -1px; }
.bat { margin-left: 15px; margin-top: -5px; }
.clock { width: 130px; margin-left: 11px; margin-top: -4px; display: flex; flex-direction: column; text-align: right; font-size: 24px; line-height: 33px; letter-spacing: -0.45px; color: #111; }
.bell { margin-left: 17px; margin-right: 42px; }
</style>
